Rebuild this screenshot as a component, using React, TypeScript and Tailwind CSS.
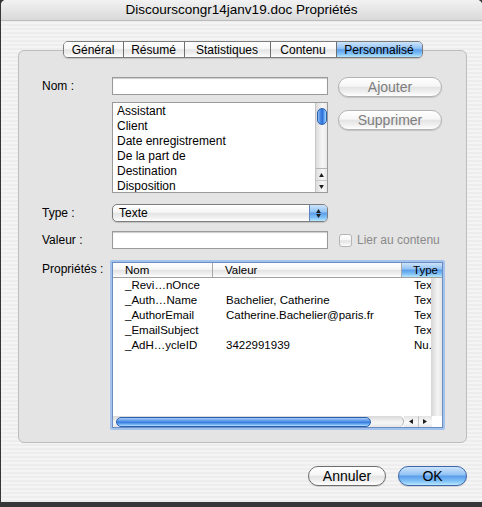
import React from 'react';

const tabs = [
  { label: 'Général', w: 'w-[59px]' },
  { label: 'Résumé', w: 'w-[61px]' },
  { label: 'Statistiques', w: 'w-[86px]' },
  { label: 'Contenu', w: 'w-[66px]' },
  { label: 'Personnalisé', w: 'w-[86px]', active: true },
];

const names = ['Assistant', 'Client', 'Date enregistrement', 'De la part de', 'Destination', 'Disposition'];

const props = [
  { nom: '_Revi…nOnce', valeur: '', type: 'Tex' },
  { nom: '_Auth…Name', valeur: 'Bachelier, Catherine', type: 'Tex' },
  { nom: '_AuthorEmail', valeur: 'Catherine.Bachelier@paris.fr', type: 'Tex' },
  { nom: '_EmailSubject', valeur: '', type: 'Tex' },
  { nom: '_AdH…ycleID', valeur: '3422991939', type: 'Nu.' },
];

// aqua gradients
const blue =
  'bg-[linear-gradient(to_bottom,#cde4fb_0%,#93c3f4_42%,#5c9fea_52%,#7fc0f6_78%,#b8e8ff_100%)]';
const white =
  'bg-[linear-gradient(to_bottom,#ffffff_0%,#f6f6f6_45%,#e4e4e4_52%,#f1f1f1_80%,#ffffff_100%)]';
const thumbV =
  'bg-[linear-gradient(to_right,#8fc0f4_0%,#3f82e2_35%,#2f6fd8_55%,#74b6f6_85%,#a9dcff_100%)]';
const thumbH =
  'bg-[linear-gradient(to_bottom,#a7cdf6_0%,#5f9bea_35%,#3a7ddf_55%,#7ebcf7_85%,#b3e2ff_100%)]';

function Tri({ dir, className = '' }: { dir: 'up' | 'down' | 'left' | 'right'; className?: string }) {
  const pts = {
    up: '0,5 3,0 6,5',
    down: '0,0 6,0 3,5',
    left: '5,0 5,6 0,3',
    right: '0,0 0,6 5,3',
  }[dir];
  const vb = dir === 'up' || dir === 'down' ? '0 0 6 5' : '0 0 5 6';
  return (
    <svg viewBox={vb} className={className}>
      <polygon points={pts} fill="#1e1e1e" />
    </svg>
  );
}

function AquaButton({ label, w, disabled, primary }: { label: string; w: string; disabled?: boolean; primary?: boolean }) {
  return (
    <div
      className={`${w} h-[20px] rounded-full border flex items-center justify-center text-[14px] leading-none shadow-[0_1px_1px_rgba(0,0,0,0.15)] ${
        primary ? `${blue} border-[#3f66a6] text-black` : `${white} ${disabled ? 'border-[#b3b3b3] text-[#7e7e7e]' : 'border-[#6e6e6e] text-black'}`
      }`}
    >
      {label}
    </div>
  );
}

export default function App() {
  return (
    <div className="w-[482px] h-[507px] bg-[#363636] overflow-hidden font-['Liberation_Sans',Arial,sans-serif] text-black">
      <div className="ml-[1px] w-[481px] h-[502px] flex flex-col rounded-t-[5px] overflow-hidden bg-[repeating-linear-gradient(0deg,#ededed_0px,#ededed_2px,#f4f4f4_2px,#f4f4f4_4px)]">
        {/* Title bar */}
        <div className="h-[21px] shrink-0 flex items-center justify-center text-[13.5px] bg-[linear-gradient(to_bottom,#f2f2f2,#d9d9d9)] border-b border-[#bcbcbc]">
          Discourscongr14janv19.doc Propriétés
        </div>

        <div className="flex-1 pl-[17px] pr-[15px] pt-[20px]">
          {/* Tabs */}
          <div className="relative z-10 h-[17px] flex justify-center">
            <div className="flex h-[17px] rounded-[5px] border border-[#7c7c7c] overflow-hidden shadow-[0_1px_1px_rgba(0,0,0,0.15)]">
              {tabs.map((t, i) => (
                <div
                  key={t.label}
                  className={`${t.w} flex items-center justify-center text-[12px] leading-none ${i > 0 ? 'border-l border-[#6f6f6f]' : ''} ${
                    t.active ? blue : white
                  }`}
                >
                  {t.label}
                </div>
              ))}
            </div>
          </div>

          {/* Panel */}
          <div className="-mt-[8px] h-[393px] rounded-[6px] border border-[#bdbdbd] bg-[#e4e4e4] pt-[26px] pl-[23px] text-[12px]">
            {/* Nom + list + buttons */}
            <div className="flex items-start">
              <div className="w-[70px] h-[18px] flex items-center">Nom :</div>
              <div className="w-[216px]">
                <div className="h-[18px] bg-white border border-[#9a9a9a] shadow-[inset_0_1px_1px_rgba(0,0,0,0.2)]" />
                <div className="mt-[7px] h-[91px] bg-white border border-[#9a9a9a] flex">
                  <div className="flex-1 pl-[4px] pt-[1px] leading-[15px] overflow-hidden">
                    {names.map((n) => (
                      <div key={n} className="h-[15px]">
                        {n}
                      </div>
                    ))}
                  </div>
                  <div className="w-[12px] flex flex-col border-l border-[#c6c6c6] bg-[linear-gradient(to_right,#dcdcdc,#f7f7f7_60%,#e8e8e8)]">
                    <div className="flex-1 pt-[5px] flex justify-center">
                      <div className={`w-[10px] h-[17px] rounded-full border border-[#2c5fae] ${thumbV}`} />
                    </div>
                    <div className="h-[12px] flex items-center justify-center border-t border-[#b5b5b5]">
                      <Tri dir="up" className="w-[5px] h-[4px]" />
                    </div>
                    <div className="h-[12px] flex items-center justify-center border-t border-[#c9c9c9]">
                      <Tri dir="down" className="w-[5px] h-[4px]" />
                    </div>
                  </div>
                </div>
              </div>
              <div className="ml-[10px] flex flex-col gap-[13px]">
                <AquaButton label="Ajouter" w="w-[104px]" disabled />
                <AquaButton label="Supprimer" w="w-[104px]" disabled />
              </div>
            </div>

            {/* Type */}
            <div className="mt-[11px] h-[18px] flex items-center">
              <div className="w-[70px]">Type :</div>
              <div className={`w-[216px] h-[18px] rounded-[5px] border border-[#7d7d7d] flex overflow-hidden ${white} shadow-[0_1px_1px_rgba(0,0,0,0.15)]`}>
                <div className="flex-1 pl-[6px] flex items-center leading-none">Texte</div>
                <div className={`w-[18px] flex flex-col items-center justify-center gap-[1px] border-l border-[#5f83bd] ${blue}`}>
                  <Tri dir="up" className="w-[5px] h-[4px]" />
                  <Tri dir="down" className="w-[5px] h-[4px]" />
                </div>
              </div>
            </div>

            {/* Valeur */}
            <div className="mt-[9px] h-[18px] flex items-center">
              <div className="w-[70px]">Valeur :</div>
              <div className="w-[216px] h-[18px] bg-white border border-[#9a9a9a] shadow-[inset_0_1px_1px_rgba(0,0,0,0.2)]" />
              <div className={`ml-[11px] w-[13px] h-[13px] rounded-[3px] border border-[#b4b4b4] ${white}`} />
              <div className="ml-[5px] text-[#8a8a8a]">Lier au contenu</div>
            </div>

            {/* Propriétés */}
            <div className="mt-[11px] flex items-start">
              <div className="w-[68px] pt-[2px] leading-[15px]">Propriétés :</div>
              <div className="w-[335px] h-[170px] rounded-[2px] border-2 border-[#a3c3ec]">
                <div className="h-full border border-[#6d8dc0] bg-white flex flex-col text-[11.5px]">
                  {/* header */}
                  <div className="h-[15px] shrink-0 flex border-b border-[#a0a0a0] leading-[14px]">
                    <div className={`w-[100px] pl-[12px] border-r border-[#a8a8a8] ${white}`}>Nom</div>
                    <div className={`w-[189px] pl-[12px] border-r border-[#a8a8a8] ${white}`}>Valeur</div>
                    <div className={`flex-1 pl-[11px] ${blue}`}>Type</div>
                  </div>
                  {/* body */}
                  <div className="flex-1 flex min-h-0">
                    <div className="flex-1 leading-[15px] overflow-hidden">
                      {props.map((p) => (
                        <div key={p.nom} className="h-[15px] flex whitespace-nowrap">
                          <div className="w-[101px] pl-[12px] overflow-hidden">{p.nom}</div>
                          <div className="w-[189px] pl-[12px] overflow-hidden">{p.valeur}</div>
                          <div className="flex-1 pl-[11px] overflow-hidden">{p.type}</div>
                        </div>
                      ))}
                    </div>
                    <div className="w-[11px] bg-[linear-gradient(to_right,#d6d6d6,#f4f4f4_60%,#e6e6e6)]" />
                  </div>
                  {/* horizontal scroll */}
                  <div className="h-[11px] shrink-0 flex">
                    <div className="w-[291px] pl-[3px] flex items-center rounded-r-full border-r border-[#b0b0b0] bg-[linear-gradient(to_bottom,#d8d8d8,#f6f6f6_60%,#e6e6e6)]">
                      <div className={`w-[255px] h-[10px] rounded-full border border-[#2c5fae] ${thumbH}`} />
                    </div>
                    <div className="w-[28px] flex bg-[linear-gradient(to_bottom,#e4e4e4,#fafafa_60%,#e9e9e9)]">
                      <div className="flex-1 flex items-center justify-center border-r border-[#c4c4c4]">
                        <Tri dir="left" className="w-[4px] h-[5px]" />
                      </div>
                      <div className="flex-1 flex items-center justify-center">
                        <Tri dir="right" className="w-[4px] h-[5px]" />
                      </div>
                    </div>
                    <div className="flex-1 bg-white" />
                  </div>
                </div>
              </div>
            </div>
          </div>

          {/* Bottom buttons */}
          <div className="mt-[23px] flex justify-end gap-[12px]">
            <AquaButton label="Annuler" w="w-[78px]" />
            <AquaButton label="OK" w="w-[69px]" primary />
          </div>
        </div>
      </div>
    </div>
  );
}
